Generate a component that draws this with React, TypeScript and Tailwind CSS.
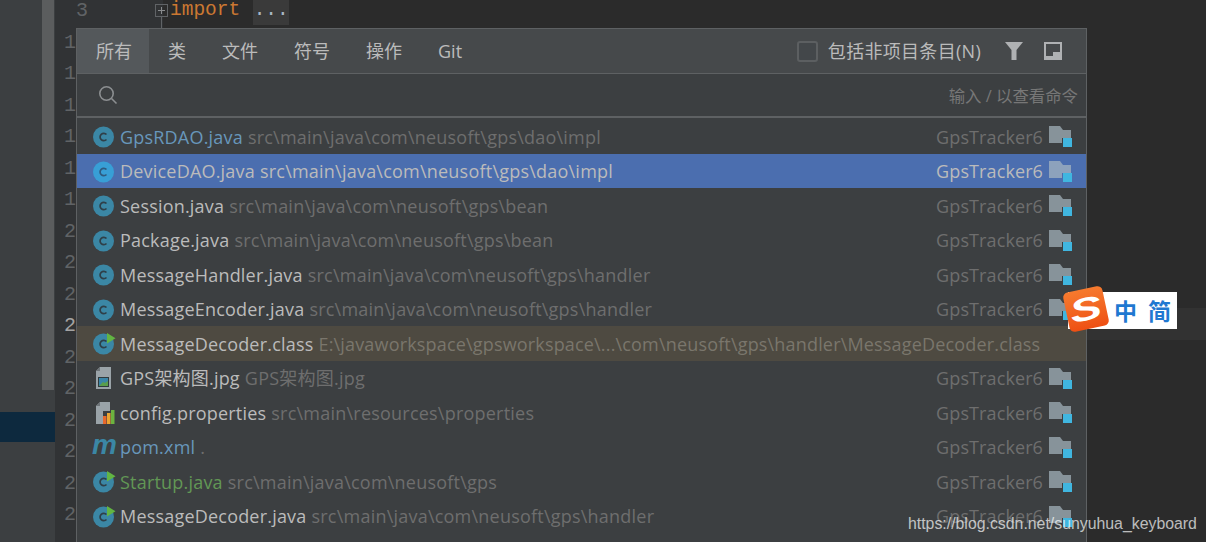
import React from "react";

const uiFont = "font-['Open_Sans','Noto_Sans_CJK_SC',sans-serif]";

type Row = {
  name: string;
  path: string;
  icon: "class" | "classLight" | "run" | "image" | "props" | "maven";
  nameColor?: string;
  selected?: boolean;
  lib?: boolean;
};

const rows: Row[] = [
  { name: "GpsRDAO.java", path: "src\\main\\java\\com\\neusoft\\gps\\dao\\impl", icon: "class", nameColor: "text-[#6897bb]" },
  { name: "DeviceDAO.java", path: "src\\main\\java\\com\\neusoft\\gps\\dao\\impl", icon: "classLight", selected: true },
  { name: "Session.java", path: "src\\main\\java\\com\\neusoft\\gps\\bean", icon: "class" },
  { name: "Package.java", path: "src\\main\\java\\com\\neusoft\\gps\\bean", icon: "class" },
  { name: "MessageHandler.java", path: "src\\main\\java\\com\\neusoft\\gps\\handler", icon: "class" },
  { name: "MessageEncoder.java", path: "src\\main\\java\\com\\neusoft\\gps\\handler", icon: "class" },
  { name: "MessageDecoder.class", path: "E:\\javaworkspace\\gpsworkspace\\...\\com\\neusoft\\gps\\handler\\MessageDecoder.class", icon: "run", lib: true },
  { name: "GPS架构图.jpg", path: "GPS架构图.jpg", icon: "image" },
  { name: "config.properties", path: "src\\main\\resources\\properties", icon: "props" },
  { name: "pom.xml", path: ".", icon: "maven", nameColor: "text-[#6897bb]" },
  { name: "Startup.java", path: "src\\main\\java\\com\\neusoft\\gps", icon: "run", nameColor: "text-[#629755]" },
  { name: "MessageDecoder.java", path: "src\\main\\java\\com\\neusoft\\gps\\handler", icon: "run" },
];

const tabs = ["类", "文件", "符号", "操作", "Git"];
const gutter = ["1", "1", "1", "1", "1", "1", "2", "2", "2", "2", "2", "2", "2", "2", "2", "2"];

function RowIcon({ kind }: { kind: Row["icon"] }) {
  if (kind === "maven") {
    return (
      <span className="font-['Liberation_Sans',sans-serif] text-[28px] leading-[24px] font-bold italic text-[#3b87a5] w-[25px] h-[24px] -mt-[3px] block">
        m
      </span>
    );
  }
  if (kind === "image") {
    return (
      <svg width="24" height="24" viewBox="0 0 24 24">
        <path d="M8 1h11v22H4V5z" fill="#9aa3a8" />
        <path d="M4 5h4V1z" fill="#6e7478" />
        <rect x="6" y="11" width="11" height="10" fill="#2f3a3e" />
        <rect x="7" y="12" width="9" height="8" fill="#3a85a8" />
        <path d="M7 20l4-4 2 1 3-2v5z" fill="#5a9e4b" />
      </svg>
    );
  }
  if (kind === "props") {
    return (
      <svg width="24" height="24" viewBox="0 0 24 24">
        <path d="M8 2h10v9h-7v13H4V6z" fill="#9aa3a8" />
        <path d="M4 6h4V2z" fill="#6e7478" />
        <rect x="11" y="16" width="3.500" height="8" fill="#e8692c" />
        <rect x="15" y="13" width="3.500" height="11" fill="#eba532" />
        <rect x="19" y="10" width="3.500" height="14" fill="#6cb33f" />
      </svg>
    );
  }
  const fill = kind === "classLight" ? "#389fd6" : "#3b87a5";
  const ink = kind === "classLight" ? "#2f5b80" : "#2f3f48";
  return (
    <svg width="24" height="24" viewBox="0 0 24 24">
      <circle cx="11.500" cy="13" r="10.500" fill={fill} />
      <path d="M14.500 10.500a3.700 3.700 0 1 0 0 5" fill="none" stroke={ink} strokeWidth="1.700" />
      {kind === "run" && <path d="M15 2v10.500l8.500-5.200z" fill="#62b543" />}
    </svg>
  );
}

function ModuleIcon({ selected }: { selected?: boolean }) {
  return (
    <svg width="24" height="24" viewBox="0 0 24 24" className="shrink-0">
      <path d="M0 2h11l3 4h8v8h-9v5H0z" fill={selected ? "#8da2bc" : "#87939a"} />
      <rect x="14" y="14" width="9" height="9" fill="#40b6e0" />
    </svg>
  );
}

function ResultRow({ row }: { row: Row }) {
  const bg = row.selected ? "bg-[#4b6eaf]" : row.lib ? "bg-[#4e4a41]" : "";
  const dim = row.selected ? "text-[#bbbbbb]" : row.lib ? "text-[#7a766c] tracking-[0.17px]" : "text-[#6e6e6e] tracking-[0.22px]";
  return (
    <div className={`h-[34.500px] shrink-0 flex items-center pl-[15px] pr-[13px] text-[18px] ${bg}`}>
      <span className="w-[28px] shrink-0 flex items-center">
        <RowIcon kind={row.icon} />
      </span>
      <span className={`whitespace-nowrap tracking-[0.2px] pt-[2px] ${row.nameColor ?? "text-[#bbbbbb]"}`}>{row.name}</span>
      <span className={`whitespace-nowrap pt-[2px] ml-[5px] ${dim} ${row.selected ? "tracking-[0.22px]" : ""}`}>{row.path}</span>
      {!row.lib && (
        <span className="ml-auto flex items-center gap-[6px]">
          <span className={`pt-[2px] tracking-[0.1px] ${row.selected ? "text-[#bbbbbb]" : "text-[#6e6e6e]"}`}>GpsTracker6</span>
          <ModuleIcon selected={row.selected} />
        </span>
      )}
    </div>
  );
}

export default function App() {
  return (
    <div className={`relative w-[1206px] h-[542px] overflow-hidden flex bg-[#2b2b2b] ${uiFont}`}>
      {/* project tree strip */}
      <div className="w-[55px] shrink-0 bg-[#3c3f41] flex flex-col">
        <div className="h-[390px] flex">
          <div className="w-[42px]" />
          <div className="w-[12px] bg-[#5b5d5e]" />
        </div>
        <div className="h-[22px]" />
        <div className="h-[30px] bg-[#0d293e]" />
      </div>

      {/* line numbers */}
      <div className="relative w-[108px] shrink-0 bg-[#313335] font-['Liberation_Mono',monospace] text-[20px] text-[#606366]">
        <div className="h-[21px] leading-[21px] pl-[21px]">3</div>
        <div className="h-[5.500px]" />
        {gutter.map((n, i) => (
          <div key={i} className={`h-[31.500px] leading-[31.500px] pl-[9px] ${i === 9 ? "text-[#a4a3a3]" : ""}`}>
            {n}
          </div>
        ))}
        <div className="absolute left-[100px] top-[4px] w-[13px] h-[13px] border border-[#606366] flex items-center justify-center">
          <div className="w-[7px] h-[1px] bg-[#8a8c8e]" />
        </div>
        <div className="absolute left-[103px] top-[7px] w-[7px] h-[7px] flex justify-center">
          <div className="w-[1px] h-[7px] bg-[#8a8c8e]" />
        </div>
        <div className="absolute left-[106px] top-[17px] w-[1px] h-[11px] bg-[#606366]" />
      </div>

      {/* editor */}
      <div className="relative flex-1 pl-[7px]">
        <div className="absolute left-0 right-0 top-[308px] h-[31.500px] bg-[#323232]" />
        <div className="relative flex items-start font-['Liberation_Mono',monospace] text-[19.500px] leading-[21px]">
          <span className="text-[#cc7832]">import</span>
          <span className="ml-[13px] h-[25px] w-[36px] bg-[#3a3a3a] text-[#a9b7c6] text-center">...</span>
        </div>
      </div>

      {/* search everywhere popup */}
      <div className="absolute left-[76px] top-[28px] w-[1011px] h-[520px] bg-[#3c3f41] border border-[#5e6163] flex flex-col">
        <div className="h-[45px] shrink-0 bg-[#46494b] border-b border-[#5e6163] flex items-stretch text-[18px] text-[#bbbbbb]">
          <div className="pl-[19px] pr-[17px] bg-[#54585b] flex items-center">所有</div>
          {tabs.map((t) => (
            <div key={t} className="pl-[19px] pr-[17px] flex items-center">
              {t}
            </div>
          ))}
          <div className="ml-auto flex items-center pr-[24px]">
            <span className="w-[21px] h-[21px] rounded-[3px] border-2 border-[#5c5f61] bg-[#43474a] mr-[10px]" />
            <span className="mr-[24px] tracking-[0.3px]">包括非项目条目(N)</span>
            <svg width="18" height="18" viewBox="0 0 18 18" className="mr-[21px]">
              <path d="M0 0h18l-6.500 8v10h-5V8z" fill="#afb1b3" />
            </svg>
            <svg width="18" height="18" viewBox="0 0 18 18">
              <path d="M0 0h18v18H0z M2 2v12h7v-4h7V2z" fill="#afb1b3" fillRule="evenodd" />
            </svg>
          </div>
        </div>
        <div className="h-[42px] shrink-0 flex items-center pl-[21px] pr-[8px]">
          <svg width="20" height="20" viewBox="0 0 20 20" fill="none" stroke="#8c8f91" strokeWidth="1.600">
            <circle cx="8.500" cy="8.500" r="6.700" />
            <path d="M13.500 13.500l5 5" />
          </svg>
          <span className="ml-auto pt-[3px] text-[16.400px] text-[#777777]">输入 / 以查看命令</span>
        </div>
        <div className="h-[2px] shrink-0 bg-[#5e6163]" />
        <div className="flex flex-col pt-[1px]">
          {rows.map((r) => (
            <ResultRow key={r.name} row={r} />
          ))}
        </div>
      </div>

      {/* sogou ime widget */}
      <div className="absolute left-[1068px] top-[292px] w-[109px] h-[37px] bg-white flex items-center pl-[46px] gap-[11px] font-['Noto_Sans_CJK_SC',sans-serif] font-bold text-[23px] leading-none text-[#1f78d1]">
        <span>中</span>
        <span>简</span>
      </div>
      <div className="absolute left-[1066px] top-[289px] w-[40px] h-[40px] rounded-[5px] bg-linear-to-b from-[#f67a2e] to-[#ee4f13] -rotate-[12deg] flex items-center justify-center font-['Liberation_Sans',sans-serif] italic font-bold text-[32px] leading-none text-white overflow-hidden">
        <span className="inline-block scale-x-150">S</span>
      </div>

      <div className="absolute left-[908px] top-[515px] font-['Liberation_Sans',sans-serif] text-[15.850px] leading-[18px] text-white/70 whitespace-nowrap">
        https://blog.csdn.net/sunyuhua_keyboard
      </div>
    </div>
  );
}
